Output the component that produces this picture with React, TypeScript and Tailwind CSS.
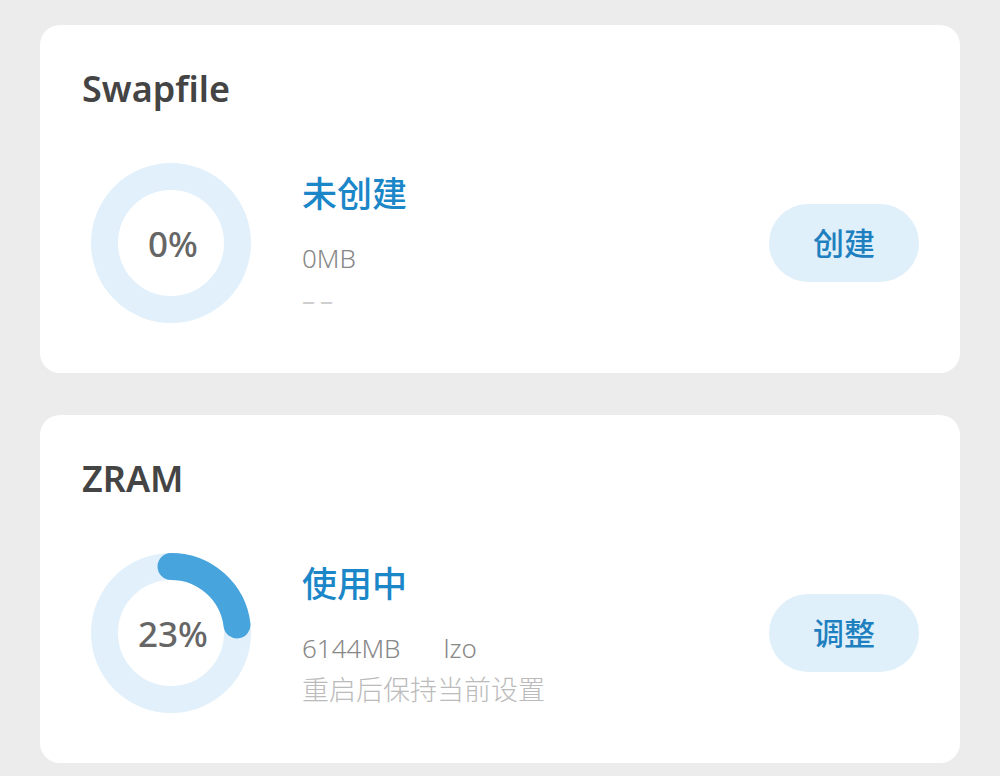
const FONT = '"Noto Sans", "Noto Sans CJK SC", sans-serif';

function Ring({ percent }: { percent: number }) {
	const r = 66.5;
	const c = 2 * Math.PI * r;
	return (
		<div className="relative w-[160px] h-[160px] shrink-0 ml-[9px]">
			<svg width="160" height="160" viewBox="0 0 160 160" className="absolute inset-0">
				<circle cx="80" cy="80" r={r} fill="none" stroke="#e1f0fa" strokeWidth="27" />
				{percent > 0 && (
					<circle
						cx="80"
						cy="80"
						r={r}
						fill="none"
						stroke="#47a4dd"
						strokeWidth="27"
						strokeLinecap="round"
						strokeDasharray={`${(c * percent) / 100} ${c}`}
						transform="rotate(-90 80 80)"
					/>
				)}
			</svg>
			<div className="absolute inset-0 flex items-center justify-center text-[35px] font-medium text-[#666] leading-none pl-[4px]">
				{percent}%
			</div>
		</div>
	);
}

type CardProps = {
	title: string;
	percent: number;
	status: string;
	size: string;
	algo?: string;
	note: string;
	noteMuted?: boolean;
	action: string;
};

function MemoryCard({ title, percent, status, size, algo, note, noteMuted, action }: CardProps) {
	return (
		<div className="bg-white rounded-[20px] pl-[42px] pr-[41px] pt-[46px] pb-[50px]">
			<div className="text-[36px] leading-[36px] font-semibold text-[#444]">{title}</div>
			<div className="flex items-center mt-[56px]">
				<Ring percent={percent} />
				<div className="flex flex-col ml-[51px] pt-[4px] flex-1">
					<div className="text-[35px] leading-[44px] font-medium text-[#1b87c8]">{status}</div>
					<div className="mt-[24px] text-[26px] leading-[36px] font-light text-[#888] flex">
						<span>{size}</span>
						{algo && <span className="ml-[43px]">{algo}</span>}
					</div>
					<div
						className={
							noteMuted
								? "mt-[6px] text-[26px] leading-[36px] tracking-[5px] text-[#cfcfcf]"
								: "mt-[6px] text-[27px] leading-[36px] font-light text-[#bbb]"
						}
					>
						{note}
					</div>
				</div>
				<button className="w-[150px] h-[78px] rounded-full bg-[#dff0fb] text-[31px] font-medium text-[#1f80bf]">
					{action}
				</button>
			</div>
		</div>
	);
}

export default function App() {
	return (
		<div className="min-h-[776px] bg-[#ececec] px-[40px] pt-[25px] flex flex-col gap-[42px]" style={{ fontFamily: FONT }}>
			<MemoryCard title="Swapfile" percent={0} status="未创建" size="0MB" note="––" noteMuted action="创建" />
			<MemoryCard title="ZRAM" percent={23} status="使用中" size="6144MB" algo="lzo" note="重启后保持当前设置" action="调整" />
		</div>
	);
}
